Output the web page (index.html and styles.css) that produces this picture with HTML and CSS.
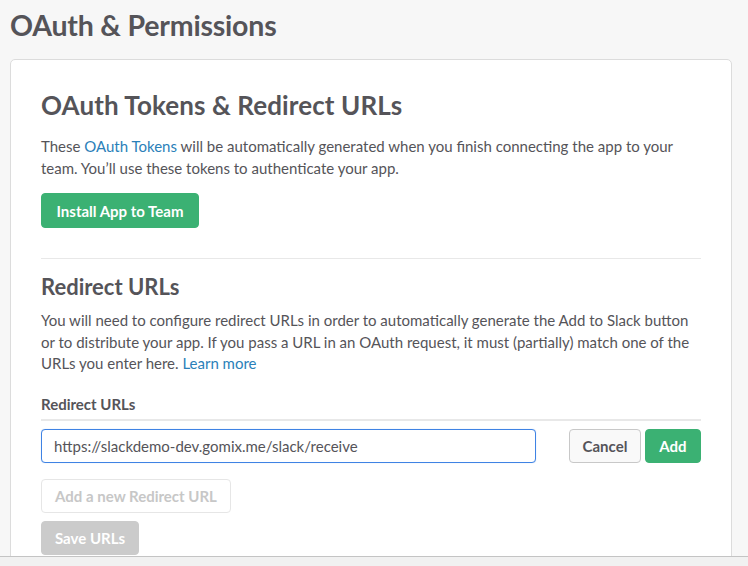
FILE: index.html
```html
<!DOCTYPE html>
<html lang="en">
<head>
<meta charset="utf-8">
<title>OAuth &amp; Permissions</title>
<link rel="stylesheet" href="styles.css">
</head>
<body>
<div class="page">
  <h1 class="page-title">OAuth &amp; Permissions</h1>
  <div class="card">
    <h2 class="card-title">OAuth Tokens &amp; Redirect URLs</h2>
    <p class="text">These <a class="link" href="#">OAuth Tokens</a> will be automatically generated when you finish connecting the app to your team. You’ll use these tokens to authenticate your app.</p>
    <button class="btn btn-green btn-install">Install App to Team</button>
    <hr class="divider">
    <h3 class="section-title">Redirect URLs</h3>
    <p class="text">You will need to configure redirect URLs in order to automatically generate the Add to Slack button or to distribute your app. If you pass a URL in an OAuth request, it must (partially) match one of the URLs you enter here. <a class="link" href="#">Learn more</a></p>
    <div class="label">Redirect URLs</div>
    <div class="url-row">
      <input class="url-input" type="text" value="https://slackdemo-dev.gomix.me/slack/receive">
      <div class="row-actions">
        <button class="btn btn-plain">Cancel</button>
        <button class="btn btn-green">Add</button>
      </div>
    </div>
    <div class="stack">
      <button class="btn btn-outline-disabled">Add a new Redirect URL</button>
      <button class="btn btn-disabled">Save URLs</button>
    </div>
  </div>
</div>
<div class="footer-bar"></div>
</body>
</html>
```

FILE: styles.css
```css
* { box-sizing: border-box; }
html, body {
  margin: 0;
  padding: 0;
  background: #f7f7f7;
  height: 100%;
  overflow: hidden;
}
body {
  font-family: Lato, "Open Sans", sans-serif;
  color: #555459;
}
.page {
  padding: 0 16px 0 10px;
}
.page-title {
  margin: 0;
  padding-top: 8px;
  font-size: 28.5px;
  line-height: 34px;
  font-weight: 700;
  color: #555459;
  letter-spacing: -0.2px;
}
.card {
  margin-top: 17px;
  background: #fff;
  border: 1px solid #dcdcdc;
  border-radius: 5px;
  padding: 29px 30px 30px 30px;
  min-height: 600px;
}
.card-title {
  margin: 0;
  font-size: 26px;
  line-height: 32px;
  font-weight: 700;
  color: #555459;
  letter-spacing: 0.1px;
}
.text {
  margin: 0;
  font-size: 15px;
  line-height: 21.5px;
  color: #555459;
}
.card-title + .text {
  margin-top: 15px;
}
.link {
  color: #2a80b9;
  text-decoration: none;
}
.btn {
  font-family: Lato, "Open Sans", sans-serif;
  font-size: 15px;
  font-weight: 700;
  height: 34px;
  line-height: 32px;
  padding: 0 14px;
  border-radius: 4px;
  border: 1px solid transparent;
  cursor: pointer;
}
.btn-green {
  background: #3bb173;
  border-color: #3bb173;
  color: #fff;
}
.btn-install {
  margin-top: 14px;
  height: 35px;
  width: 158px;
  padding: 0;
}
.divider {
  margin: 30px 0 0 0;
  border: 0;
  border-top: 1px solid #e8e8e8;
}
.section-title {
  margin: 14px 0 0 0;
  font-size: 22px;
  line-height: 28px;
  font-weight: 700;
  color: #555459;
}
.section-title + .text {
  margin-top: 9px;
}
.label {
  margin-top: 19px;
  font-size: 15px;
  font-weight: 700;
  line-height: 20px;
  padding-bottom: 5px;
  border-bottom: 2px solid #e8e8e8;
}
.url-row {
  margin-top: 8px;
  display: flex;
  align-items: center;
}
.url-input {
  width: 75%;
  height: 34px;
  border: 1px solid #3f83e4;
  border-radius: 4px;
  padding: 0 12px;
  font-family: Lato, "Open Sans", sans-serif;
  font-size: 15px;
  color: #555459;
  outline: none;
  box-shadow: 0 0 1px rgba(63, 131, 228, 0.4);
}
.row-actions {
  margin-left: auto;
  display: flex;
  gap: 4px;
}
.btn-plain {
  background: #f9f9f9;
  border-color: #c8c8c8;
  color: #555459;
  width: 72px;
  padding: 0;
}
.row-actions .btn-green {
  width: 56px;
  padding: 0;
}
.stack {
  margin-top: 16px;
  display: flex;
  flex-direction: column;
  align-items: flex-start;
  gap: 8px;
}
.btn-outline-disabled {
  background: #fff;
  border-color: #e6e6e6;
  color: #c7c7c7;
  width: 190px;
  padding: 0;
}
.btn-disabled {
  background: #cbcbcb;
  border-color: #cbcbcb;
  color: #fff;
  width: 98px;
  padding: 0;
}
.footer-bar {
  position: fixed;
  left: 0;
  right: 0;
  bottom: 0;
  height: 10px;
  background: #f1f1f1;
  border-top: 1px solid #c4c4c4;
}
```
